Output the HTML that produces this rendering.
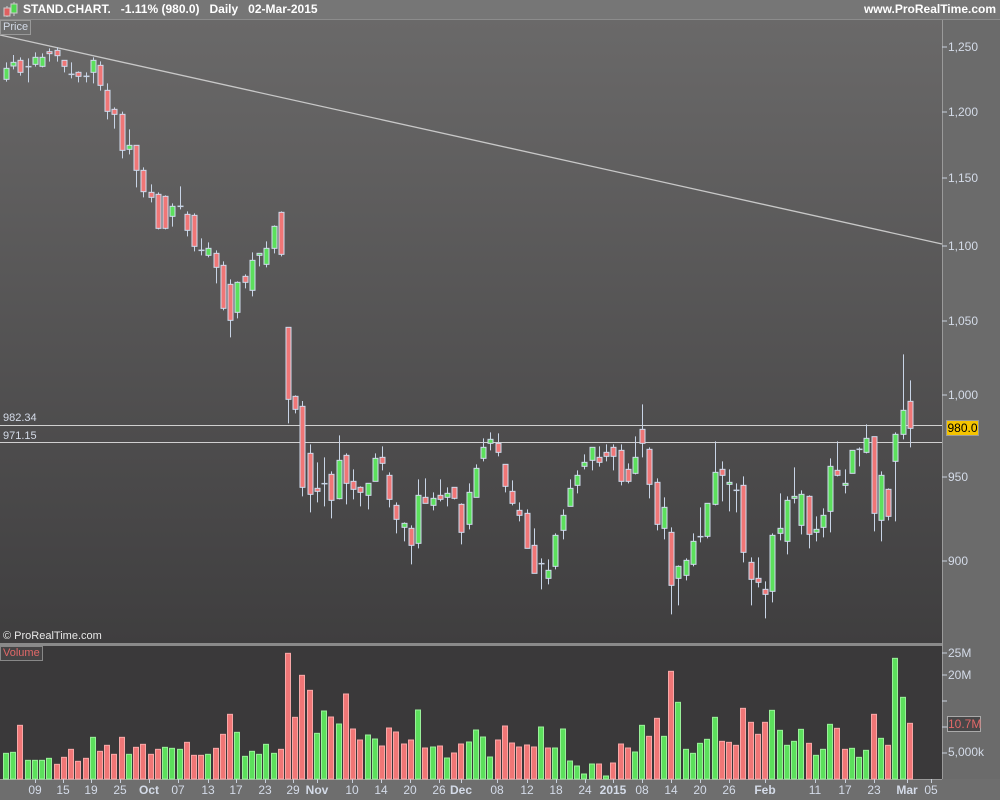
<!DOCTYPE html>
<html><head><meta charset="utf-8"><style>
*{margin:0;padding:0}
body{width:1000px;height:800px;overflow:hidden;background:#6b6b6b;font-family:"Liberation Sans",sans-serif;position:relative}
.hdr{position:absolute;left:0;top:0;width:1000px;height:19px;background:#767676;border-bottom:1px solid #8c8c8c;color:#fff;font-weight:bold;font-size:12px;line-height:19px}
.t{position:absolute;white-space:nowrap}
.pl{color:#d4dbe8;font-size:11px}
.pr{color:#d4dbe8;font-size:12px}
.bx{color:#d4dbe8;font-size:12px;font-weight:normal}
.bd{font-weight:bold;font-size:12px;color:#d4dbe8}
</style></head><body>
<div class="hdr">
<svg style="position:absolute;left:2px;top:2px" width="18" height="16"><line x1="5" y1="4" x2="5" y2="15" stroke="#ccc"/><rect x="2" y="6" width="6" height="8" fill="#e06060" stroke="#ccc"/><line x1="12" y1="0" x2="12" y2="14" stroke="#ccc"/><rect x="9" y="2" width="6" height="9" fill="#50d850" stroke="#ccc"/></svg>
<span class="t" style="left:23px">STAND.CHART.&nbsp;&nbsp;&nbsp;-1.11% (980.0)&nbsp;&nbsp;&nbsp;Daily&nbsp;&nbsp;&nbsp;02-Mar-2015</span>
<span class="t" style="right:4px">www.ProRealTime.com</span>
</div>
<svg id="c" style="position:absolute;left:0;top:0" width="1000" height="800">
<defs><linearGradient id="g" x1="0" y1="0" x2="0" y2="1"><stop offset="0" stop-color="#6a6969"/><stop offset="1" stop-color="#3f3e3f"/></linearGradient></defs>
<rect x="0" y="20" width="942" height="623" fill="url(#g)"/>
<rect x="942" y="20" width="58" height="760" fill="#6b6b6b"/>
<line x1="942.5" y1="20" x2="942.5" y2="780" stroke="#9a9a9a"/>
<rect x="0" y="643" width="942" height="3" fill="#8a8a8a"/>
<rect x="0" y="646" width="942" height="133" fill="#3a393a"/>
<rect x="0" y="779" width="1000" height="21" fill="#6e6e6e"/>
<line x1="0" y1="779.5" x2="942" y2="779.5" stroke="#9a9a9a"/>
<line x1="0" y1="35" x2="942" y2="244" stroke="#c8c8c8" stroke-width="1.3"/>
<line x1="0" y1="425.5" x2="942" y2="425.5" stroke="#d0d0d0"/>
<line x1="0" y1="442.5" x2="942" y2="442.5" stroke="#d0d0d0"/>
<g id="cd"></g><g id="vb"></g>
<g stroke="#c8d0dc">
<line x1="942" y1="47" x2="947" y2="47"/><line x1="942" y1="112" x2="947" y2="112"/><line x1="942" y1="178" x2="947" y2="178"/><line x1="942" y1="246" x2="947" y2="246"/><line x1="942" y1="321" x2="947" y2="321"/><line x1="942" y1="395" x2="947" y2="395"/><line x1="942" y1="477" x2="947" y2="477"/><line x1="942" y1="561" x2="947" y2="561"/>
<line x1="942" y1="653" x2="947" y2="653"/><line x1="942" y1="675" x2="947" y2="675"/><line x1="942" y1="701" x2="947" y2="701"/><line x1="942" y1="727" x2="947" y2="727"/><line x1="942" y1="753" x2="947" y2="753"/>
</g>
</svg>
<div class="t pl" style="left:0;top:20px;border:1px solid #999;background:#6e6e6e;padding:0 2px;font-size:11px;line-height:13px">Price</div>
<div class="t" style="left:0;top:646px;border:1px solid #888;background:#454445;color:#e06868;padding:0 2px;font-size:11px;line-height:13px">Volume</div>
<div class="t pl" style="left:3px;top:630px;color:#e8e8e8">© ProRealTime.com</div>
<div class="t pl" style="left:3px;top:412px">982.34</div>
<div class="t pl" style="left:3px;top:430px">971.15</div>
<div class="t pr" style="left:948px;top:40px">1,250</div>
<div class="t pr" style="left:948px;top:105px">1,200</div>
<div class="t pr" style="left:948px;top:171px">1,150</div>
<div class="t pr" style="left:948px;top:239px">1,100</div>
<div class="t pr" style="left:948px;top:314px">1,050</div>
<div class="t pr" style="left:948px;top:388px">1,000</div>
<div class="t pr" style="left:948px;top:470px">950</div>
<div class="t pr" style="left:948px;top:554px">900</div>
<div class="t" style="left:946px;top:420px;width:31px;height:14px;background:#f5c400;border:1px solid #999;color:#000;font-size:12px;line-height:14px;text-align:center">980.0</div>
<div class="t pr" style="left:948px;top:646px">25M</div>
<div class="t pr" style="left:948px;top:668px">20M</div>
<div class="t pr" style="left:948px;top:745px">5,000k</div>
<div class="t" style="left:947px;top:716px;width:32px;height:14px;background:#484748;border:1px solid #aaa;color:#e06868;font-size:12px;line-height:14px;text-align:center">10.7M</div>
<div id="ax"></div>
<script>
var C=[[18,1,115,148,97,155],[40,1,97,108,75,118],[61,0,91,127,82,137],[82,2,110,110,85,157],[106,1,82,103,67,110],[127,1,82,109,70,112],[148,0,65,70,55,95],[169,0,61,77,52,95],[193,0,91,109,91,127],[214,2,133,133,97,145],[235,0,127,139,124,157],[256,2,139,139,127,157],[277,1,91,127,82,160],[301,0,106,166,94,182],[322,0,181,244,160,268],[343,0,238,253,232,296],[364,0,253,361,245,385],[388,1,346,358,298,373],[409,0,346,421,346,472],[430,0,421,485,412,502],[451,0,487,502,463,517],[475,0,493,595,487,598],[496,0,499,595,496,598],[517,1,529,559,520,590],[538,2,529,529,469,538],[562,0,553,601,544,619],[583,0,556,649,550,664],[604,2,661,661,625,676],[625,1,655,676,637,682],[649,0,670,712,661,760],[670,0,706,835,694,841],[691,0,763,871,748,922],[712,1,757,847,754,865],[733,0,739,757,733,775],[757,1,691,781,667,799],[778,1,670,676,670,709],[799,1,655,703,634,712],[820,1,589,655,586,670],[844,0,547,673,544,679]];
var C2=[[0,22,238,22,310],[0,229,268,226,280],[0,259,502,243,529],[0,400,523,373,577],[0,505,514,427,547],[2,491,491,412,559],[0,463,541,454,595],[1,421,536,346,538],[0,406,490,400,553],[0,484,508,448,538],[0,502,517,499,559],[1,490,526,490,568],[1,415,484,400,484],[0,412,430,379,451],[0,466,538,457,562],[0,556,598,547,640],[1,610,622,607,664],[0,625,676,616,733],[1,526,670,478,685],[0,532,550,475,550],[1,535,556,517,571],[0,526,538,478,544],[1,520,532,502,559],[0,502,535,502,538],[0,553,637,550,673],[1,517,613,490,628],[1,445,532,433,532],[1,382,415,355,424],[1,358,370,337,391],[0,370,397,340,409],[0,433,499,433,517],[0,514,550,481,556],[0,571,586,547,604],[0,580,685,568,685],[0,676,760,625,760],[2,731,731,715,808],[1,751,775,718,793],[1,646,739,640,748],[1,586,631,568,658],[1,505,559,478,559],[1,466,496,451,520],[1,427,439,403,448],[1,382,421,382,451]];
var C3=[[0,352,367,319,380],[0,337,349,313,364],[0,322,349,313,391],[0,331,424,313,436],[0,388,424,370,430],[1,352,400,289,403],[0,268,310,193,352],[0,328,433,322,475],[0,427,553,415,571],[1,502,565,472,598],[0,577,736,562,823],[1,679,715,676,796],[1,661,706,655,721],[1,604,673,580,679],[2,590,590,502,607],[1,490,589,490,595],[1,397,493,304,496],[0,388,406,364,484],[1,427,433,388,514],[2,451,451,430,517],[0,436,637,409,667],[0,667,718,652,796],[0,715,727,652,742],[0,748,763,724,835],[1,586,754,580,787],[1,565,580,460,601],[1,481,604,469,643],[1,469,475,382,490],[1,463,556,451,583],[0,469,583,466,625],[1,568,577,529,604],[1,526,562,505,592],[1,379,514,355,577],[0,391,406,304,409],[1,430,436,388,460],[1,331,400,331,400],[2,328,328,322,379],[1,295,337,253,340],[0,290,520,290,574],[1,406,541,394,604],[0,448,529,445,541],[1,283,364,277,544],[1,211,283,43,298],[0,184,265,121,322]];
var all=[];
C.forEach(function(c){all.push([c[1],30+c[2]/3,30+c[3]/3,30+c[4]/3,30+c[5]/3])});
C2.forEach(function(c){all.push([c[0],320+c[1]/3,320+c[2]/3,320+c[3]/3,320+c[4]/3])});
C3.forEach(function(c){all.push([c[0],340+c[1]/3,340+c[2]/3,340+c[3]/3,340+c[4]/3])});
var s='';
all.forEach(function(c,i){var x=6+i*7.23;var xc=Math.round(x)+0.5;
s+='<line x1="'+xc+'" y1="'+c[3]+'" x2="'+xc+'" y2="'+c[4]+'" stroke="#c8d4e6"/>';
if(c[0]==2){s+='<line x1="'+(xc-3)+'" y1="'+c[1]+'" x2="'+(xc+3)+'" y2="'+c[1]+'" stroke="#c8d4e6" stroke-width="1.5"/>';}
else{var h=Math.max(c[2]-c[1],2);s+='<rect x="'+(xc-2.5)+'" y="'+c[1]+'" width="5" height="'+h+'" fill="'+(c[0]?'#5ce05c':'#f07676')+'" stroke="#d0dcee" stroke-width="1"/>';}
});
document.getElementById('cd').innerHTML=s;
var V=[[1,370],[1,367],[0,286],[1,391],[1,391],[1,391],[1,385],[0,403],[0,382],[0,358],[0,394],[0,385],[1,322],[0,364],[0,346],[0,373],[0,322],[1,373],[0,352],[0,343],[0,373],[0,358],[1,352],[1,355],[1,358],[0,337],[0,376],[0,376],[1,373],[0,355],[0,313],[0,253],[1,307],[1,379],[1,364],[1,373],[1,343],[1,370],[0,358],[0,70],[0,262],[0,136],[0,181],[1,310]];
var vy=[];V.forEach(function(v){vy.push([v[0],630+v[1]/3])});
var V2c='GRGRRRGGRRRRRGRGRGRRGGGGRRRRRRGRGGGGGGRGRRRG';
var V2h=[213,231,252,162,267,300,285,297,318,264,276,312,300,210,324,321,318,354,339,312,306,270,291,351,300,258,309,321,315,321,261,324,324,267,363,378,402,372,372,408,369,312,324,336];
vy=vy.slice(0,44);
for(var k=0;k<44;k++)vy.push([V2c[k]=='G'?1:0,640+V2h[k]/3]);
var V3=[[1,256],[0,289],[0,235],[1,289],[0,94],[1,187],[1,328],[1,340],[1,310],[1,298],[1,232],[0,304],[0,307],[0,316],[0,205],[0,247],[0,283],[0,247],[1,211],[1,271],[1,316],[1,304],[1,268],[0,310],[1,346],[1,328],[1,253],[0,265],[0,328],[1,325],[1,352],[1,331],[0,223],[1,295],[0,316],[1,55],[1,172],[0,250]];
V3.forEach(function(v){vy.push([v[0],640+v[1]/3])});
s='';
vy.forEach(function(v,i){var x=Math.round(6+i*7.23);
s+='<rect x="'+(x-2.5)+'" y="'+v[1]+'" width="5" height="'+(779-v[1])+'" fill="'+(v[0]?'#5ce05c':'#f07676')+'" stroke="'+(v[0]?'#9af09a':'#f8a8a8')+'" stroke-width="1"/>';});
document.getElementById('vb').innerHTML=s;
var L=[["09",35],["15",63],["19",91],["25",120],["Oct",149,1],["07",178],["13",208],["17",236],["23",265],["29",293],["Nov",317,1],["10",352],["14",381],["20",410],["26",439],["Dec",461,1],["08",497],["12",527],["18",556],["24",585],["2015",613,1],["08",642],["14",671],["20",700],["26",729],["Feb",765,1],["11",815],["17",845],["23",874],["Mar",907,1],["05",931]];
s='';
L.forEach(function(l){s+='<div class="t '+(l[2]?'bd':'bx')+'" style="left:'+(l[1]-30)+'px;width:60px;text-align:center;top:783px;font-size:12px">'+l[0]+'</div><div class="t" style="left:'+l[1]+'px;top:779px;width:1px;height:4px;background:#c8d0dc"></div>';});
document.getElementById('ax').innerHTML=s;
</script>
</body></html>
